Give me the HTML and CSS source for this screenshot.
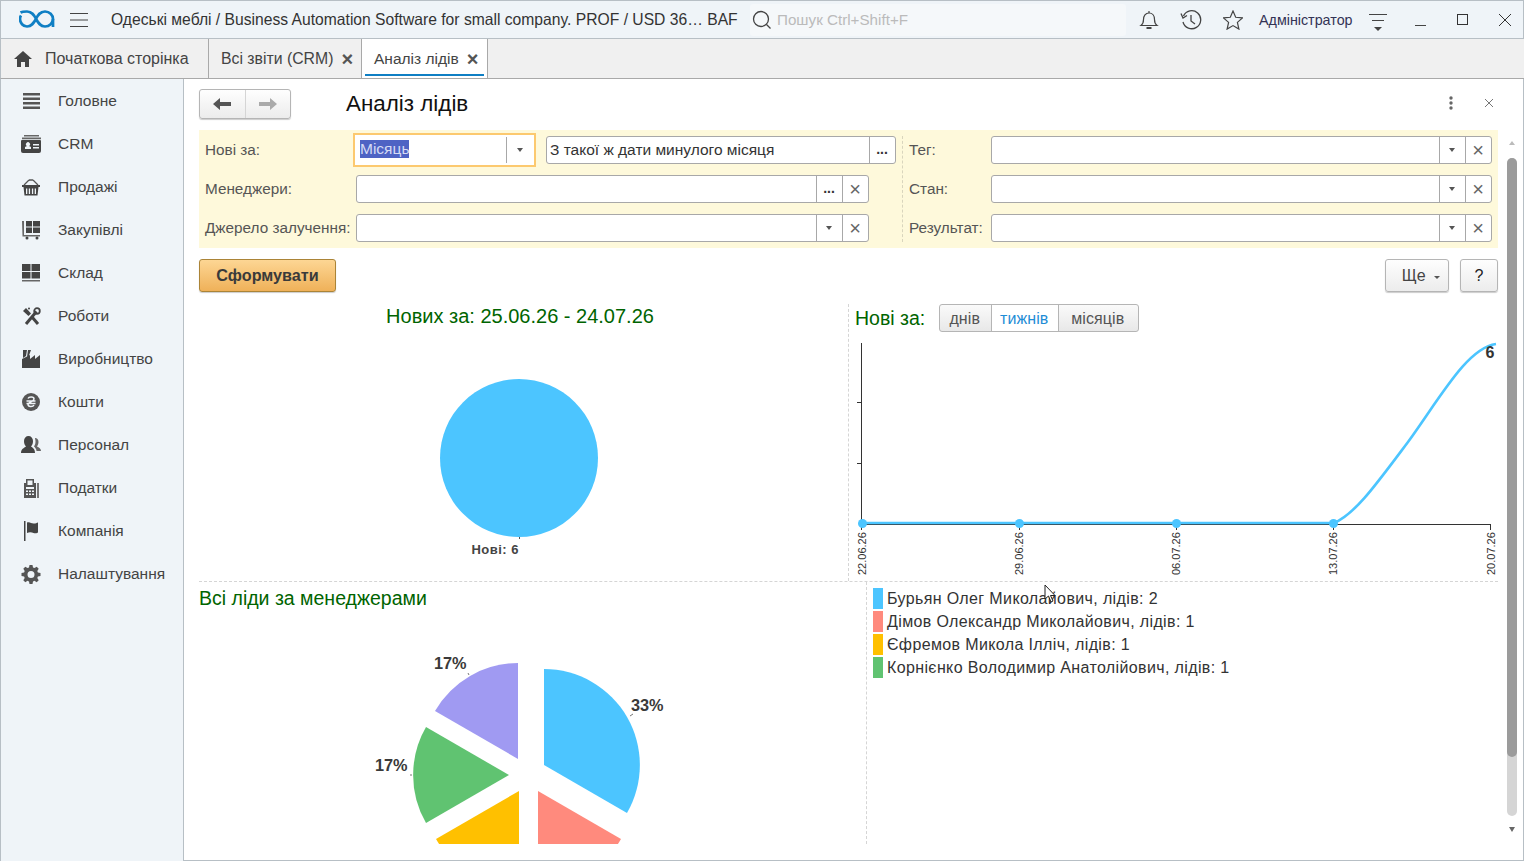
FILE: index.html
```html
<!DOCTYPE html>
<html lang="uk">
<head>
    <meta charset="UTF-8">
    <title>Аналіз лідів</title>
    <link rel="stylesheet" href="styles.css">
</head>
<body>
    <!-- верхня панель -->
    <header class="topbar">
        <svg class="logo" width="36" height="19" viewBox="0 0 36 19" fill="none" stroke="#0f7fc4" stroke-width="2.7"><path d="M1.5 2.5C3 1.700 5.500 1.500 8 1.500C13 1.500 15 5 17 9C19 12.500 21 16.500 26 16.500C30.500 16.500 34 13 34 9C34 5 30.500 1.500 26 1.500C21 1.500 19 5 17 9C15 12.500 13 16.500 8 16.500C4 16.500 1 13 1 9C1 7.500 1.300 6.500 2 5.500"/><path d="M34 9V17"/></svg>
        <svg class="burger" width="18" height="14" viewBox="0 0 18 14" stroke="#444"><path d="M0 .5h18M0 7h18M0 13.500h18"/></svg>
        <div class="app-title">Одеські меблі / Business Automation Software for small company. PROF / USD 36… BAF</div>
        <div class="search">
            <svg width="20" height="20" viewBox="0 0 20 20" fill="none" stroke="#444" stroke-width="1.3"><circle cx="9" cy="9" r="7.5"/><path d="M14.500 14.500l4 4"/></svg>
            <span>Пошук Ctrl+Shift+F</span>
        </div>
        <svg class="tool bell" width="20" height="20" viewBox="0 0 20 20" fill="none" stroke="#444" stroke-width="1.2"><path d="M2 15.500c2-1.500 2.500-3 2.500-6C4.500 6 6.500 3 10 3s5.500 3 5.500 6.500c0 3 .5 4.500 2.500 6z"/><path d="M10 1v2"/><path d="M7.500 18h5" stroke-width="2"/></svg>
        <svg class="tool hist" width="22" height="20" viewBox="0 0 22 20" fill="none" stroke="#444" stroke-width="1.3"><path d="M3.500 6A9 9 0 1 1 3 12"/><path d="M1 3.500l2 4.500 4-2.500"/><path d="M11 5v6l4 3"/></svg>
        <svg class="tool star" width="20" height="20" viewBox="0 0 20 20" fill="none" stroke="#444" stroke-width="1.2"><path d="M10 1l2.700 6.300 6.800.6-5.100 4.500 1.500 6.700L10 15.600l-5.900 3.500 1.500-6.700L.5 7.900l6.800-.6z"/></svg>
        <div class="user">Адміністратор</div>
        <svg class="tool usermenu" width="18" height="18" viewBox="0 0 18 18" fill="#444"><path d="M0 .5h18M3 6.500h12" stroke="#444"/><path d="M5 13h8l-4 4z"/></svg>
        <div class="winbtns">
            <svg width="14" height="14" viewBox="0 0 14 14" stroke="#444" fill="none"><path d="M1 12.500h11"/></svg>
            <svg width="14" height="14" viewBox="0 0 14 14" stroke="#333" fill="none"><rect x="1.5" y="1.5" width="10" height="10"/></svg>
            <svg width="14" height="14" viewBox="0 0 14 14" stroke="#333" fill="none"><path d="M1 1l12 12M13 1L1 13"/></svg>
        </div>
    </header>

    <!-- вкладки -->
    <nav class="tabs">
        <div class="tab tab-home">
            <svg width="20" height="16" viewBox="0 0 20 16" fill="#444"><path d="M10 0l9 8h-3v8h-4v-5H8v5H4V8H1z"/></svg>
            <span>Початкова сторінка</span>
        </div>
        <div class="tab tab-reports"><span>Всі звіти (CRM)</span><b class="tab-x">×</b></div>
        <div class="tab tab-active"><span>Аналіз лідів</span><b class="tab-x">×</b></div>
    </nav>

    <div class="layout">
        <!-- меню розділів -->
        <aside class="sidebar">
            <div class="menu-item">
                <svg class="menu-icon" viewBox="0 0 20 20" fill="#555"><path d="M2 2h17v2.500H2zM2 6.500h17V9H2zM2 11h17v2.500H2zM2 15.500h17V18H2z"/></svg>
                <span>Головне</span>
            </div>
            <div class="menu-item">
                <svg class="menu-icon" viewBox="0 0 20 20" fill="#444"><path d="M3 1h15v1.500H3zM1 3.500h19v1.800H1z" fill="#666"/><path fill-rule="evenodd" d="M2 6h17a1 1 0 0 1 1 1v10a2 2 0 0 1-2 2H2a2 2 0 0 1-2-2V7a1 1 0 0 1 1-1zM4 15h6v-2l-2-1a2 2 0 1 0-2 0l-2 1zM12 10v1.500h6V10zM12 13v1.500h6V13z"/></svg>
                <span>CRM</span>
            </div>
            <div class="menu-item">
                <svg class="menu-icon" viewBox="0 0 20 20" fill="#444"><path fill-rule="evenodd" d="M1 8h18v2H1zM2.500 10h15l-1 8.500h-13zM5 11.500v5.500h1.300v-5.500zM7.800 11.500v5.500h1.300v-5.500zM10.900 11.500v5.500h1.300v-5.500zM13.700 11.500v5.500H15v-5.500z"/><path d="M3 8l5-5M17 8l-5-5M8 3h4" stroke="#555" stroke-width="1.3" fill="none"/></svg>
                <span>Продажі</span>
            </div>
            <div class="menu-item">
                <svg class="menu-icon" viewBox="0 0 20 20" fill="#444"><path d="M5 1h6v5.500H5zM12 1h7v5.500h-7zM5 7.500h6V13H5zM12 7.500h7V13h-7z"/><path d="M1 1h2v14h16v1.500H1.500z" fill="#666"/><circle cx="6" cy="18" r="1.5"/><circle cx="16" cy="18" r="1.5"/></svg>
                <span>Закупівлі</span>
            </div>
            <div class="menu-item">
                <svg class="menu-icon" viewBox="0 0 20 20" fill="#444"><path d="M1 1h8.500v7H1zM10.500 1H19v7h-8.500zM1 9h8.500v6.500H1zM10.500 9H19v6.500h-8.500z"/><path d="M1 17h18v1.500H1z" fill="#666"/></svg>
                <span>Склад</span>
            </div>
            <div class="menu-item">
                <svg class="menu-icon" viewBox="0 0 20 20" fill="none" stroke="#444"><path d="M2 5l3-3 5 5.500-2.500 2.500z" fill="#444" stroke="none"/><path d="M15.500 5.500L5 18" stroke-width="3"/><path d="M11 11l6 7" stroke-width="3"/><circle cx="16" cy="5" r="2.800" stroke-width="1.8"/><circle cx="8" cy="2.500" r="1" fill="#444" stroke="none"/></svg>
                <span>Роботи</span>
            </div>
            <div class="menu-item">
                <svg class="menu-icon" viewBox="0 0 20 20" fill="#444"><path d="M2 1h4l-1 6-3 2zM7 1h3L8 6.500 6 8zM1 10l8-4v4l5-4v4l5-4v13H1z"/></svg>
                <span>Виробництво</span>
            </div>
            <div class="menu-item">
                <svg class="menu-icon" viewBox="0 0 20 20"><circle cx="10" cy="10" r="9" fill="#555"/><path d="M7 6.500c1-2 6-2 6 .5s-6 3-6 5.500 5 2.500 6 .5M5.500 9h9M5.500 11.500h9" stroke="#eff4f8" stroke-width="1.5" fill="none"/></svg>
                <span>Кошти</span>
            </div>
            <div class="menu-item">
                <svg class="menu-icon" viewBox="0 0 20 20" fill="#444"><path d="M0 18c0-4 3-5 5-6.500C3.500 10 3 8 3 6c0-3 2-5 4.500-5S12 3 12 6c0 2-.5 4-2 5.500 2 1.500 4 2.500 4 6.500z"/><path d="M14 3c2 0 3.500 1.500 3.500 4s-1 3.500-1.500 4.500c2 1 4 2 4 4.500h-4.500c0-2-1.500-3.500-2.500-4.500 1-1.500 1.500-3 1.500-5 0-1-.2-2-.5-3z" fill="#666"/></svg>
                <span>Персонал</span>
            </div>
            <div class="menu-item">
                <svg class="menu-icon" viewBox="0 0 20 20"><path fill="#555" fill-rule="evenodd" d="M5 1h8v4h2v15H3V5h2zM6.500 2.500V7h5V2.500zM5 9v2h8V9zM5 12.500v1.500h2v-1.500zM8 12.500v1.500h2v-1.500zM11 12.500v1.500h2v-1.500zM5 15.500V17h2v-1.500zM8 15.500V17h2v-1.500zM11 15.500V17h2v-1.500z"/><path d="M16 5h2v15h-2z" fill="#777"/></svg>
                <span>Податки</span>
            </div>
            <div class="menu-item">
                <svg class="menu-icon" viewBox="0 0 20 20" fill="#444"><path d="M3 0h1.500v20H3zM6 1.500c3-1 4 1 6.500 1s3-.5 4.500-1v10c-2 1-3 1-4.500.5S9 10.500 6 12z"/></svg>
                <span>Компанія</span>
            </div>
            <div class="menu-item">
                <svg class="menu-icon" viewBox="0 0 20 20" fill="#555"><path fill-rule="evenodd" d="M8.500 1h3l.5 2.500 1.500.6L15.700 2.700l2 2-1.400 2.200.6 1.600 2.600.5v3l-2.600.5-.6 1.500 1.400 2.200-2 2-2.200-1.400-1.500.6-.5 2.600h-3L8 17.400l-1.500-.6-2.200 1.400-2-2 1.400-2.200-.6-1.500L.5 12V9l2.600-.5.6-1.600L2.300 4.700l2-2 2.200 1.400L8 3.500zM10 7a3.500 3.500 0 1 0 0 7 3.500 3.500 0 0 0 0-7z"/></svg>
                <span>Налаштування</span>
            </div>
        </aside>

        <main class="content">
            <div class="form-head">
                <div class="nav-btns">
                    <div class="nav-btn">
                        <svg width="18" height="12" viewBox="0 0 18 12" fill="#555"><path d="M0 6l7-6v4h11v4H7v4z"/></svg>
                    </div>
                    <div class="nav-btn">
                        <svg width="18" height="12" viewBox="0 0 18 12" fill="#aaa"><path d="M18 6l-7-6v4H0v4h11v4z"/></svg>
                    </div>
                </div>
                <h1 class="form-title">Аналіз лідів</h1>
                <svg class="form-more" width="4" height="14" viewBox="0 0 4 14" fill="#666"><circle cx="2" cy="2" r="1.7"/><circle cx="2" cy="7" r="1.7"/><circle cx="2" cy="12" r="1.7"/></svg>
                <svg class="form-close" width="10" height="10" viewBox="0 0 10 10" stroke="#777" fill="none"><path d="M1 1l8 8M9 1L1 9"/></svg>
            </div>

            <!-- відбір -->
            <section class="filters">
                <div class="filters-left">
                    <div class="f-row">
                        <label class="f-label">Нові за:</label>
                        <div class="field field-month">
                            <div class="f-input"><span class="selected">Місяць</span></div>
                            <div class="f-btn f-btn-wide"><i class="caret"></i></div>
                        </div>
                        <div class="field field-period">
                            <div class="f-input">З такої ж дати минулого місяця</div>
                            <div class="f-btn dots">...</div>
                        </div>
                    </div>
                    <div class="f-row">
                        <label class="f-label">Менеджери:</label>
                        <div class="field field-long">
                            <div class="f-input"></div>
                            <div class="f-btn dots">...</div>
                            <div class="f-btn clear">×</div>
                        </div>
                    </div>
                    <div class="f-row">
                        <label class="f-label">Джерело залучення:</label>
                        <div class="field field-long">
                            <div class="f-input"></div>
                            <div class="f-btn"><i class="caret"></i></div>
                            <div class="f-btn clear">×</div>
                        </div>
                    </div>
                </div>
                <div class="filters-right">
                    <div class="f-row">
                        <label class="f-label f-label-r">Тег:</label>
                        <div class="field field-r">
                            <div class="f-input"></div>
                            <div class="f-btn"><i class="caret"></i></div>
                            <div class="f-btn clear">×</div>
                        </div>
                    </div>
                    <div class="f-row">
                        <label class="f-label f-label-r">Стан:</label>
                        <div class="field field-r">
                            <div class="f-input"></div>
                            <div class="f-btn"><i class="caret"></i></div>
                            <div class="f-btn clear">×</div>
                        </div>
                    </div>
                    <div class="f-row">
                        <label class="f-label f-label-r">Результат:</label>
                        <div class="field field-r">
                            <div class="f-input"></div>
                            <div class="f-btn"><i class="caret"></i></div>
                            <div class="f-btn clear">×</div>
                        </div>
                    </div>
                </div>
            </section>

            <div class="actions">
                <button class="btn-main">Сформувати</button>
                <div class="actions-right">
                    <button class="btn btn-more">Ще <i class="caret caret-small"></i></button>
                    <button class="btn btn-help">?</button>
                </div>
            </div>

            <!-- діаграми -->
            <section class="charts-top">
                <div class="panel-pie">
                    <div class="pie-title">Нових за: 25.06.26 - 24.07.26</div>
                    <svg class="pie-one" width="200" height="190" viewBox="0 0 200 190">
                        <circle cx="100" cy="79" r="79" fill="#4cc5ff"/>
                        <path d="M100.5 158v2" stroke="#555"/>
                        <text x="100" y="175" text-anchor="end" class="label-small">Нові: 6</text>
                    </svg>
                </div>
                <div class="panel-line">
                    <div class="line-head">
                        <div class="chart-title">Нові за:</div>
                        <div class="seg">
                            <div class="seg-item seg-days">днів</div>
                            <div class="seg-item seg-weeks">тижнів</div>
                            <div class="seg-item seg-months">місяців</div>
                        </div>
                    </div>
                    <svg class="line-chart" width="643" height="240" viewBox="0 0 643 240">
                        <path d="M6.500 5v181.500H636M635.500 186v6M164.500 186v6M321.500 186v6M478.500 186v6M6.500 186v6M2 64.500h4.500M2 125.500h4.500" fill="none" stroke="#333"/>
                        <path d="M6.500 185H479C500 176 520 148 553 104C585 60 612 10 641 6" fill="none" stroke="#4cc5ff" stroke-width="2.6"/>
                        <circle cx="7.5" cy="185.500" r="4.500" fill="#4cc5ff"/><circle cx="164.500" cy="185.500" r="4.500" fill="#4cc5ff"/><circle cx="321.500" cy="185.500" r="4.500" fill="#4cc5ff"/><circle cx="478.500" cy="185.500" r="4.500" fill="#4cc5ff"/>
                        <text x="635" y="20" text-anchor="middle" class="label-bold">6</text>
                        <text transform="translate(10.500,237) rotate(-90)" class="label-axis">22.06.26</text>
                        <text transform="translate(167.500,237) rotate(-90)" class="label-axis">29.06.26</text>
                        <text transform="translate(324.500,237) rotate(-90)" class="label-axis">06.07.26</text>
                        <text transform="translate(481.500,237) rotate(-90)" class="label-axis">13.07.26</text>
                        <text transform="translate(639.500,237) rotate(-90)" class="label-axis">20.07.26</text>
                    </svg>
                </div>
            </section>

            <section class="charts-bottom">
                <div class="panel-mgr">
                    <div class="chart-title chart-title-mgr">Всі ліди за менеджерами</div>
                    <svg class="pie-mgr" width="668" height="216" viewBox="0 0 668 216">
                        <path d="M345 137v-96a96 96 0 0 1 83 144z" fill="#4cc5ff"/>
                        <path d="M339 163l83 48a96 96 0 0 1-83 48z" fill="#ff8a7d"/>
                        <path d="M320 163v96a96 96 0 0 1-83-48z" fill="#ffc000"/>
                        <path d="M310 147l-83 48a96 96 0 0 1 0-96z" fill="#60c371"/>
                        <path d="M319 131l-83-48a96 96 0 0 1 83-48z" fill="#a09af2"/>
                        <path d="M431 88l3-2M269 45l1 2M211 147h2" stroke="#777" fill="none"/>
                        <text x="432" y="83" class="label-pct">33%</text>
                        <text x="235" y="41" class="label-pct">17%</text>
                        <text x="176" y="143" class="label-pct">17%</text>
                    </svg>
                </div>
                <ul class="legend">
                    <li class="legend-row"><i class="swatch sw-blue"></i>Бурьян Олег Миколайович, лідів: 2</li>
                    <li class="legend-row"><i class="swatch sw-red"></i>Дімов Олександр Миколайович, лідів: 1</li>
                    <li class="legend-row"><i class="swatch sw-yellow"></i>Єфремов Микола Ілліч, лідів: 1</li>
                    <li class="legend-row"><i class="swatch sw-green"></i>Корнієнко Володимир Анатолійович, лідів: 1</li>
                </ul>
                <svg class="cursor" width="14" height="20" viewBox="0 0 14 20" fill="#fff" stroke="#222"><path d="M1 1v14l3.500-3 2.500 6 2-1-2.500-5.500H11z"/></svg>
            </section>

            <div class="scroll">
                <i class="scroll-up"></i>
                <div class="scroll-track"><div class="scroll-thumb"></div></div>
                <i class="scroll-down"></i>
            </div>
        </main>
    </div>
</body>
</html>
```

FILE: styles.css
```css
* { box-sizing: border-box; }
html, body { height: 100%; }
body {
    margin: 0;
    font-family: "Liberation Sans", Arial, sans-serif;
    font-size: 16px;
    color: #333;
    background: #fff;
    overflow: hidden;
}

/* верхня панель */
.topbar {
    height: 39px;
    display: flex;
    align-items: center;
    background: #eff4f8;
    border: 1px solid #b7bfc5;
}
.logo { margin-left: 18px; flex: none; }
.burger { margin-left: 15px; flex: none; }
.app-title { margin-left: 23px; width: 640px; white-space: nowrap; font-size: 15.67px; color: #333; }
.search {
    width: 376px;
    height: 32px;
    margin-left: -1px;
    display: flex;
    align-items: center;
    gap: 5px;
    padding-left: 2px;
    background: #f5f8fa;
    border-radius: 3px;
    color: #bbb;
    font-size: 15.2px;
}
.tool { flex: none; }
.bell { margin-left: 13px; }
.hist { margin-left: 21px; }
.star { margin-left: 21px; }
.user { margin-left: 16px; font-size: 14.3px; color: #335; width: 100px; white-space: nowrap; }
.usermenu { margin-left: 10px; margin-top: 7px; }
.winbtns { margin-left: 27px; display: flex; gap: 28px; }

/* вкладки */
.tabs {
    height: 40px;
    display: flex;
    background: #f0f0f0;
    border-bottom: 1px solid #a9a9a9;
    border-left: 1px solid #b7bfc5;
}
.tab {
    display: flex;
    align-items: center;
    border-right: 1px solid #a9a9a9;
    white-space: nowrap;
    color: #444;
}
.tab-home { width: 208px; padding-left: 12px; gap: 12px; }
.tab-reports { width: 153px; padding-left: 12px; gap: 8px; font-size: 15.8px; }
.tab-active {
    width: 126px;
    padding-left: 12px;
    gap: 8px;
    background: #fff;
    position: relative;
    font-size: 15.5px;
}
.tab-active::after {
    content: "";
    position: absolute;
    left: 3px;
    right: 3px;
    bottom: 2px;
    height: 2px;
    background: #0f7fc4;
}
.tab-x { font-size: 20px; line-height: 16px; color: #555; font-weight: bold; }

.layout { display: flex; height: 782px; }

/* меню розділів */
.sidebar {
    width: 184px;
    flex: none;
    background: #eff4f8;
    border-right: 1px solid #b7bfc5;
    border-left: 1px solid #b7bfc5;
}
.menu-item {
    height: 43px;
    display: flex;
    align-items: center;
    padding-left: 20px;
    gap: 17px;
    color: #444;
    font-size: 15.5px;
}
.menu-icon { width: 20px; height: 20px; flex: none; }

.content {
    flex: 1;
    min-width: 0;
    position: relative;
    padding-left: 15px;
    padding-top: 10px;
    border-right: 1px solid #b7bfc5;
    border-bottom: 1px solid #b7bfc5;
}

.form-head { height: 41px; display: flex; align-items: flex-start; }
.nav-btns {
    width: 92px;
    height: 30px;
    display: flex;
    border: 1px solid #b5b5b5;
    border-radius: 3px;
    background: linear-gradient(#fefefe, #ececec);
    box-shadow: 0 1px 1px #ccc;
}
.nav-btn { flex: 1; display: flex; align-items: center; justify-content: center; }
.nav-btn + .nav-btn { border-left: 1px solid #d5d5d5; }
.form-title { margin: 3px 0 0 55px; font-size: 22.4px; font-weight: normal; color: #111; line-height: 24px; }
.form-more { margin-left: 981px; margin-top: 7px; }
.form-close { margin-left: 31px; margin-top: 9px; }

/* відбір */
.filters {
    width: 1299px;
    height: 118px;
    background: #fef9db;
    display: flex;
    position: relative;
}
.filters::after {
    content: "";
    position: absolute;
    left: 703px;
    top: 6px;
    height: 106px;
    border-left: 1px dashed #d9d5bd;
}
.filters-left { width: 704px; }
.filters-right { flex: 1; padding-left: 6px; }
.f-row { height: 39px; display: flex; align-items: center; }
.f-label { width: 157px; padding-left: 6px; white-space: nowrap; color: #555; flex: none; font-size: 15.3px; }
.f-label-r { width: 82px; padding-left: 0; }
.field {
    height: 28px;
    display: flex;
    background: #fff;
    border: 1px solid #a8a8a8;
    border-radius: 3px;
}
.field-month { width: 183px; height: 34px; margin-left: -3px; border: 2px solid #fcc96f; border-radius: 0; padding: 2px 1px; }
.field-period { width: 350px; margin-left: 10px; }
.field-long { width: 513px; }
.field-r { width: 501px; }
.f-input { flex: 1; padding-left: 3px; line-height: 26px; white-space: nowrap; color: #333; font-size: 15.5px; }
.field-month .f-input { padding-left: 4px; line-height: 24px; }
.selected { background: #4e63c4; color: #d5dbf4; display: inline-block; line-height: 18px; }
.f-btn {
    width: 26px;
    display: flex;
    align-items: center;
    justify-content: center;
    border-left: 1px solid #a8a8a8;
    padding-right: 1px;
    color: #555;
}
.f-btn-wide { width: 27px; }
.clear { font-size: 20px; line-height: 20px; color: #666; }
.dots { font-weight: bold; font-size: 14px; padding-bottom: 2px; color: #333; }
.caret {
    display: block;
    width: 0;
    height: 0;
    border-left: 3.5px solid transparent;
    border-right: 3.5px solid transparent;
    border-top: 4px solid #555;
}
.caret-small { display: inline-block; margin: 0 0 2px 4px; border-left-width: 3px; border-right-width: 3px; border-top-width: 3px; }

.actions { display: flex; justify-content: space-between; margin-top: 11px; width: 1299px; height: 34px; }
.actions-right { display: flex; gap: 11px; }
.btn-main {
    width: 137px;
    height: 33px;
    padding: 0;
    border: 1px solid #ab8437;
    border-radius: 3px;
    background: linear-gradient(#fdd694, #efb159);
    font: bold 16.2px "Liberation Sans", Arial, sans-serif;
    color: #3a3a3a;
    box-shadow: 0 1px 1px #ccc;
}
.btn {
    height: 33px;
    padding: 0;
    border: 1px solid #b5b5b5;
    border-radius: 3px;
    background: linear-gradient(#fefefe, #ececec);
    font: 16px "Liberation Sans", Arial, sans-serif;
    color: #444;
    box-shadow: 0 1px 1px #ccc;
}
.btn-more { width: 64px; padding-left: 8px; }
.btn-help { width: 38px; color: #222; }

/* діаграми */
.charts-top { display: flex; width: 1299px; height: 278px; margin-top: 11px; border-bottom: 1px dashed #d5d5d5; }
.panel-pie { width: 650px; display: flex; flex-direction: column; align-items: center; border-right: 1px dashed #d5d5d5; padding-right: 9px; }
.pie-title { margin-left: 2px; font-size: 20px; color: #006400; line-height: 24px; white-space: nowrap; }
.pie-one { margin-top: 51px; }
.label-small { font: bold 13px "Liberation Sans", Arial, sans-serif; letter-spacing: .5px; fill: #444; }
.label-bold { font: bold 16px "Liberation Sans", Arial, sans-serif; fill: #333; }
.label-axis { font: 11px "Liberation Sans", Arial, sans-serif; fill: #333; }
.label-pct { font: bold 16.3px "Liberation Sans", Arial, sans-serif; fill: #3a3a3a; }
.panel-line { flex: 1; padding-left: 6px; }
.line-head { display: flex; align-items: center; gap: 14px; height: 28px; }
.chart-title { font-size: 19.5px; color: #006400; line-height: 24px; white-space: nowrap; }
.seg { display: flex; width: 200px; height: 28px; border: 1px solid #b5b5b5; border-radius: 3px; background: linear-gradient(#fafafa, #e8e8e8); }
.seg-item { line-height: 27px; color: #555; text-align: center; letter-spacing: .1px; }
.seg-item + .seg-item { border-left: 1px solid #b5b5b5; }
.seg-days { width: 51px; padding-right: 2px; }
.seg-weeks { width: 67px; background: #fff; color: #1f8dd6; padding-right: 2px; }
.seg-months { flex: 1; padding-right: 2px; }
.line-chart { display: block; margin-top: 6px; }

.charts-bottom { display: flex; width: 1299px; height: 262px; position: relative; overflow: hidden; }
.panel-mgr { width: 668px; height: 262px; border-right: 1px dashed #d5d5d5; position: relative; overflow: hidden; }
.chart-title-mgr { margin-top: 4px; }
.pie-mgr { display: block; position: absolute; left: 0; top: 46px; }
.legend { list-style: none; margin: 5px 0 0 0; padding: 0 0 0 6px; }
.legend-row { height: 23px; display: flex; align-items: center; gap: 4px; white-space: nowrap; letter-spacing: .37px; color: #333; }
.swatch { width: 10px; height: 21px; flex: none; }
.sw-blue { background: #4cc5ff; }
.sw-red { background: #ff8a7d; }
.sw-yellow { background: #ffc000; }
.sw-green { background: #60c371; }
.cursor { position: absolute; left: 845px; top: 2px; }

/* прокрутка */
.scroll { position: absolute; top: 0; bottom: 0; right: 0; width: 16px; }
.scroll-track { position: absolute; left: 0; width: 10px; top: 79px; height: 658px; border-radius: 5px; background: #d5d5d5; }
.scroll-thumb { height: 599px; border-radius: 5px; background: #9b9b9b; }
.scroll-up, .scroll-down { position: absolute; left: 2px; width: 0; height: 0; border-left: 3px solid transparent; border-right: 3px solid transparent; }
.scroll-up { top: 62px; border-bottom: 4px solid #bbb; }
.scroll-down { bottom: 28px; border-top: 5px solid #666; }
```
